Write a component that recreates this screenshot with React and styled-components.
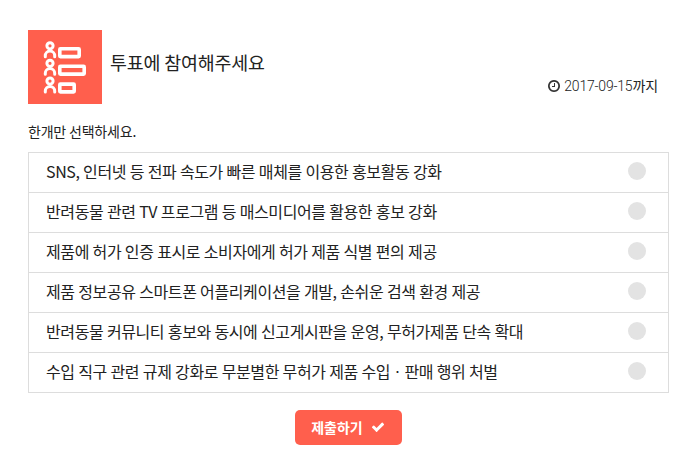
import { useState } from 'react';
import styled, { createGlobalStyle } from 'styled-components';

const options = [
	'SNS, 인터넷 등 전파 속도가 빠른 매체를 이용한 홍보활동 강화',
	'반려동물 관련 TV 프로그램 등 매스미디어를 활용한 홍보 강화',
	'제품에 허가 인증 표시로 소비자에게 허가 제품 식별 편의 제공',
	'제품 정보공유 스마트폰 어플리케이션을 개발, 손쉬운 검색 환경 제공',
	'반려동물 커뮤니티 홍보와 동시에 신고게시판을 운영, 무허가제품 단속 확대',
	'수입 직구 관련 규제 강화로 무분별한 무허가 제품 수입ㆍ판매 행위 처벌',
];

const PollIcon = () => (
	<svg width="74" height="74" viewBox="0 0 74 74" fill="none" stroke="#fff">
		{[
			{ y: 12.8, w: 19.4 },
			{ y: 30.3, w: 24.4 },
			{ y: 48.1, w: 14.4 },
		].map(({ y, w }) => (
			<g key={y} strokeWidth="3">
				<circle cx="22" cy={y + 3} r="3.1" />
				<path
					d={`M17.3 ${y + 14} V${y + 13} a4.7 4.7 0 0 1 9.4 0 V${y + 14}`}
					strokeLinecap="round"
				/>
				<rect x="31.8" y={y + 6} width={w} height="7.8" rx="0.6" strokeWidth="3.6" />
			</g>
		))}
	</svg>
);

const ClockIcon = () => (
	<svg width="14" height="14" viewBox="0 0 1792 1792" fill="currentColor">
		<path d="M1024 544v448q0 14-9 23t-23 9h-320q-14 0-23-9t-9-23v-64q0-14 9-23t23-9h224v-352q0-14 9-23t23-9h64q14 0 23 9t9 23zm416 352q0-148-73-273t-198-198-273-73-273 73-198 198-73 273 73 273 198 198 273 73 273-73 198-198 73-273zm224 0q0 209-103 385.5t-279.5 279.5-385.5 103-385.5-103-279.5-279.5-103-385.5 103-385.5 279.5-279.5 385.5-103 385.5 103 279.5 279.5 103 385.5z" />
	</svg>
);

const CheckIcon = () => (
	<svg width="14" height="14" viewBox="0 0 1792 1792" fill="currentColor">
		<path d="M1671 566q0 40-28 68l-724 724-136 136q-28 28-68 28t-68-28l-136-136-362-362q-28-28-28-68t28-68l136-136q28-28 68-28t68 28l294 295 656-657q28-28 68-28t68 28l136 136q28 28 28 68z" />
	</svg>
);

const App = () => {
	const [chosen, setChosen] = useState(null);

	return (
		<PollWrap>
			<GlobalStyle />
			<Header>
				<IconBox>
					<PollIcon />
				</IconBox>
				<Title>투표에 참여해주세요</Title>
				<Deadline>
					<ClockIcon />
					<DeadlineDate>2017-09-15</DeadlineDate>
					<DeadlineSuffix>까지</DeadlineSuffix>
				</Deadline>
			</Header>
			<Guide>한개만 선택하세요.</Guide>
			<OptionList>
				{options.map((option, index) => (
					<Option key={option} onClick={() => setChosen(index)}>
						<OptionName>{option}</OptionName>
						<Radio $isChose={chosen === index} />
					</Option>
				))}
			</OptionList>
			<SubmitButton>
				제출하기
				<CheckIcon />
			</SubmitButton>
		</PollWrap>
	);
};

const GlobalStyle = createGlobalStyle`
	* {
		box-sizing: border-box;
	}

	body {
		margin: 0;
		background: #fff;
		color: #333;
		font-family: 'Noto Sans CJK KR', sans-serif;
	}
`;

const PollWrap = styled.div`
	display: flex;
	flex-direction: column;
	width: 700px;
	height: 459px;
	padding: 30px 31px 0 28px;
`;

const Header = styled.div`
	display: flex;
	height: 74px;
`;

const IconBox = styled.div`
	flex: none;
	width: 74px;
	height: 74px;
	background-color: #ff5f4d;
`;

const Title = styled.h1`
	margin: 19px 0 0 8px;
	font-weight: 400;
	font-size: 18.4px;
	line-height: 26px;
	letter-spacing: -0.15px;
	color: #222;
`;

const Deadline = styled.div`
	display: flex;
	align-items: center;
	align-self: flex-end;
	height: 20px;
	margin: 0 11px 8px auto;
	font-size: 14px;
	line-height: 20px;
`;

const DeadlineDate = styled.span`
	margin-left: 3px;
	font-family: Roboto, sans-serif;
	font-weight: 300;
	font-size: 14px;
	letter-spacing: -0.2px;
	color: #222;
`;

const DeadlineSuffix = styled.span`
	margin-top: -2px;
	letter-spacing: -0.1px;
	color: #222;
`;

const Guide = styled.p`
	margin: 17px 0 0;
	font-size: 14px;
	line-height: 20px;
	letter-spacing: -0.2px;
	color: #222;
`;

const OptionList = styled.ul`
	margin: 11px 0 0;
	padding: 0;
	list-style: none;
	border: 1px solid #ddd;
`;

const Option = styled.li`
	display: flex;
	align-items: center;
	justify-content: space-between;
	height: 40px;
	padding: 0 22px 3px 17px;
	cursor: pointer;

	&:not(:last-child) {
		border-bottom: 1px solid #ddd;
	}

	&:last-child {
		height: 39px;
	}
`;

const OptionName = styled.span`
	font-size: 16px;
	line-height: 24px;
	letter-spacing: -0.4px;
	word-spacing: 0.45px;
	color: #222;
	white-space: nowrap;
`;

const Radio = styled.span`
	width: 18px;
	height: 18px;
	margin-bottom: 1px;
	border-radius: 50%;
	background-color: ${props => (props.$isChose ? '#ff5f4d' : '#e3e3e3')};
`;

const SubmitButton = styled.button`
	display: flex;
	align-items: center;
	justify-content: center;
	gap: 8px;
	align-self: center;
	width: 107px;
	height: 35px;
	margin: 17px 1px 0 0;
	padding: 0 0 2px;
	border: none;
	border-radius: 5px;
	background-color: #ff5f4d;
	color: #fff;
	font-family: inherit;
	font-weight: 700;
	font-size: 14px;
	cursor: pointer;
`;

export default App;
